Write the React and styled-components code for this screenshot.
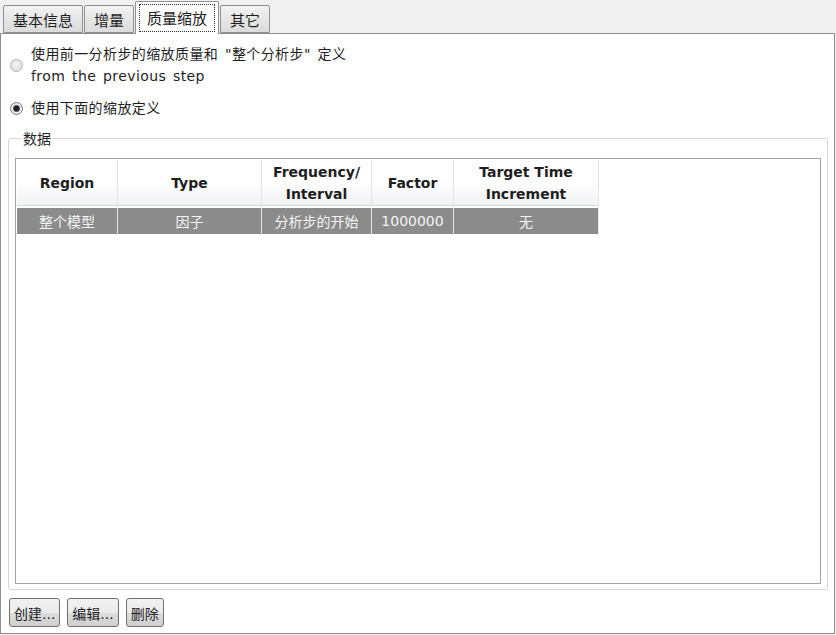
import React from 'react';
import styled, { createGlobalStyle } from 'styled-components';

const GlobalStyle = createGlobalStyle`
  html, body {
    margin: 0;
    padding: 0;
    background: #f0f0f0;
  }
  body {
    font-family: "DejaVu Sans", "Noto Sans CJK SC", sans-serif;
    font-size: 14px;
    color: #1e1e1e;
  }
`

const Window = styled.div`
  width: 836px;
  height: 635px;
  display: flex;
  flex-direction: column;
  background: #f0f0f0;
  box-sizing: border-box;
`

const TabStrip = styled.div`
  display: flex;
  align-items: flex-end;
  height: 33px;
  padding-left: 3px;
  gap: 1px;
  position: relative;
  z-index: 1;
`

const Tab = styled.div`
  box-sizing: border-box;
  height: ${({ $active }) => ($active ? '33px' : '28px')};
  margin-bottom: ${({ $active }) => ($active ? '-1px' : '0')};
  padding: ${({ $active }) => ($active ? '2px 3px 0' : '0 9px')};
  display: flex;
  align-items: ${({ $active }) => ($active ? 'flex-start' : 'center')};
  border: 1px solid #8e8f8f;
  border-bottom: ${({ $active }) => ($active ? 'none' : '1px solid #8e8f8f')};
  border-radius: 2px 2px 0 0;
  background: ${({ $active }) =>
    $active ? '#ffffff' : 'linear-gradient(#f3f3f3, #e6e6e6 50%, #dcdcdc)'};
  font-family: "Noto Sans CJK SC", sans-serif;
  font-size: 15px;
  color: #1e1e1e;
  white-space: nowrap;
`

const FocusLabel = styled.span`
  border: 1px dotted #333;
  padding: 1px 7px;
  line-height: 24px;
`

const Panel = styled.div`
  flex: 1;
  display: flex;
  flex-direction: column;
  background: #fff;
  border: 1px solid #8c8e94;
  margin: 0 1px 1px 0;
  box-sizing: border-box;
`

const Option = styled.div`
  display: flex;
  align-items: center;
  gap: 8px;
  padding-left: 9px;
  margin-top: ${({ $top }) => $top}px;
`

const Radio = styled.span`
  flex: none;
  width: 13px;
  height: 13px;
  border-radius: 50%;
  box-sizing: border-box;
  border: 1px solid ${({ $checked }) => ($checked ? '#7a7a7a' : '#b4b4b4')};
  background: ${({ $checked }) =>
    $checked
      ? 'radial-gradient(circle, #222 0 2.6px, #888 3.4px, #eee 4px, #e2e2e2 6px)'
      : 'radial-gradient(circle at 45% 40%, #f6f6f6, #d4d4d4)'};
`

const OptionText = styled.div`
  font-family: "DejaVu Sans", "Noto Sans CJK SC", sans-serif;
  font-size: 14px;
  line-height: 22px;
  letter-spacing: 0.4px;
  word-spacing: 2px;
  color: #1e1e1e;
`

const GroupBox = styled.fieldset`
  flex: 1;
  display: flex;
  flex-direction: column;
  margin: 10px 6px 0 7px;
  padding: 0 6px 5px 6px;
  border: 1px solid #d5d5d5;
  border-radius: 3px;
  min-height: 0;
`

const Legend = styled.legend`
  margin-left: 6px;
  padding: 0 2px;
  font-family: "Noto Sans CJK SC", sans-serif;
  font-size: 14px;
  line-height: 18px;
  color: #1e1e1e;
`

const ListView = styled.div`
  flex: 1;
  margin-top: 11px;
  border: 1px solid #a3a3a3;
  padding: 1px;
  background: #fff;
`

const Table = styled.table`
  border-collapse: separate;
  border-spacing: 0;
  table-layout: fixed;
  width: 581px;
`

const HeadCell = styled.th`
  width: ${({ $w }) => $w}px;
  height: 46px;
  padding: 0;
  box-sizing: border-box;
  background: linear-gradient(#ffffff, #ffffff 50%, #f1f2f4);
  border-right: 1px solid #e2e3e5;
  border-bottom: 1px solid #d7d9dc;
  font-family: "DejaVu Sans", "Noto Sans CJK SC", sans-serif;
  font-weight: 700;
  font-size: 14px;
  line-height: 22px;
  color: #1e1e1e;
  text-align: center;
  vertical-align: middle;
`

const Cell = styled.td`
  height: 28px;
  padding: 0;
  box-sizing: border-box;
  background: #8b8b8b;
  border-right: 1px solid #e4e4e4;
  border-top: 2px solid #fff;
  font-family: "DejaVu Sans", "Noto Sans CJK SC", sans-serif;
  font-size: 14px;
  color: #f4f4f4;
  text-align: center;
  vertical-align: middle;
  white-space: nowrap;
  overflow: hidden;
`

const ButtonRow = styled.div`
  display: flex;
  gap: 7px;
  padding: 8px 0 6px 8px;
`

const Button = styled.button`
  height: 29px;
  padding: 0 4px;
  box-sizing: border-box;
  border: 1px solid #707070;
  border-radius: 3px;
  background: linear-gradient(#f2f2f2, #ebebeb 50%, #dddddd 51%, #cfcfcf);
  font-family: "DejaVu Sans", "Noto Sans CJK SC", sans-serif;
  font-size: 14px;
  color: #1e1e1e;
`

const tabs = ['基本信息', '增量', '质量缩放', '其它']

const columns = [
  { title: 'Region', w: 101 },
  { title: 'Type', w: 144 },
  { title: ['Frequency/', 'Interval'], w: 110 },
  { title: 'Factor', w: 82 },
  { title: ['Target Time', 'Increment'], w: 145 },
]

const row = ['整个模型', '因子', '分析步的开始', '1000000', '无']

const App = () => {
  return (
    <Window>
      <GlobalStyle />
      <TabStrip>
        {tabs.map((t) =>
          t === '质量缩放' ? (
            <Tab key={t} $active>
              <FocusLabel>{t}</FocusLabel>
            </Tab>
          ) : (
            <Tab key={t}>{t}</Tab>
          )
        )}
      </TabStrip>
      <Panel>
        <Option $top={9}>
          <Radio />
          <OptionText>
            使用前一分析步的缩放质量和 "整个分析步" 定义
            <br />
            from the previous step
          </OptionText>
        </Option>
        <Option $top={10}>
          <Radio $checked />
          <OptionText>使用下面的缩放定义</OptionText>
        </Option>
        <GroupBox>
          <Legend>数据</Legend>
          <ListView>
            <Table>
              <thead>
                <tr>
                  {columns.map((c, i) => (
                    <HeadCell key={i} $w={c.w}>
                      {Array.isArray(c.title) ? (
                        <>
                          {c.title[0]}
                          <br />
                          {c.title[1]}
                        </>
                      ) : (
                        c.title
                      )}
                    </HeadCell>
                  ))}
                </tr>
              </thead>
              <tbody>
                <tr>
                  {row.map((v, i) => (
                    <Cell key={i}>{v}</Cell>
                  ))}
                </tr>
              </tbody>
            </Table>
          </ListView>
        </GroupBox>
        <ButtonRow>
          <Button>创建...</Button>
          <Button>编辑...</Button>
          <Button>删除</Button>
        </ButtonRow>
      </Panel>
    </Window>
  );
}

export default App;
